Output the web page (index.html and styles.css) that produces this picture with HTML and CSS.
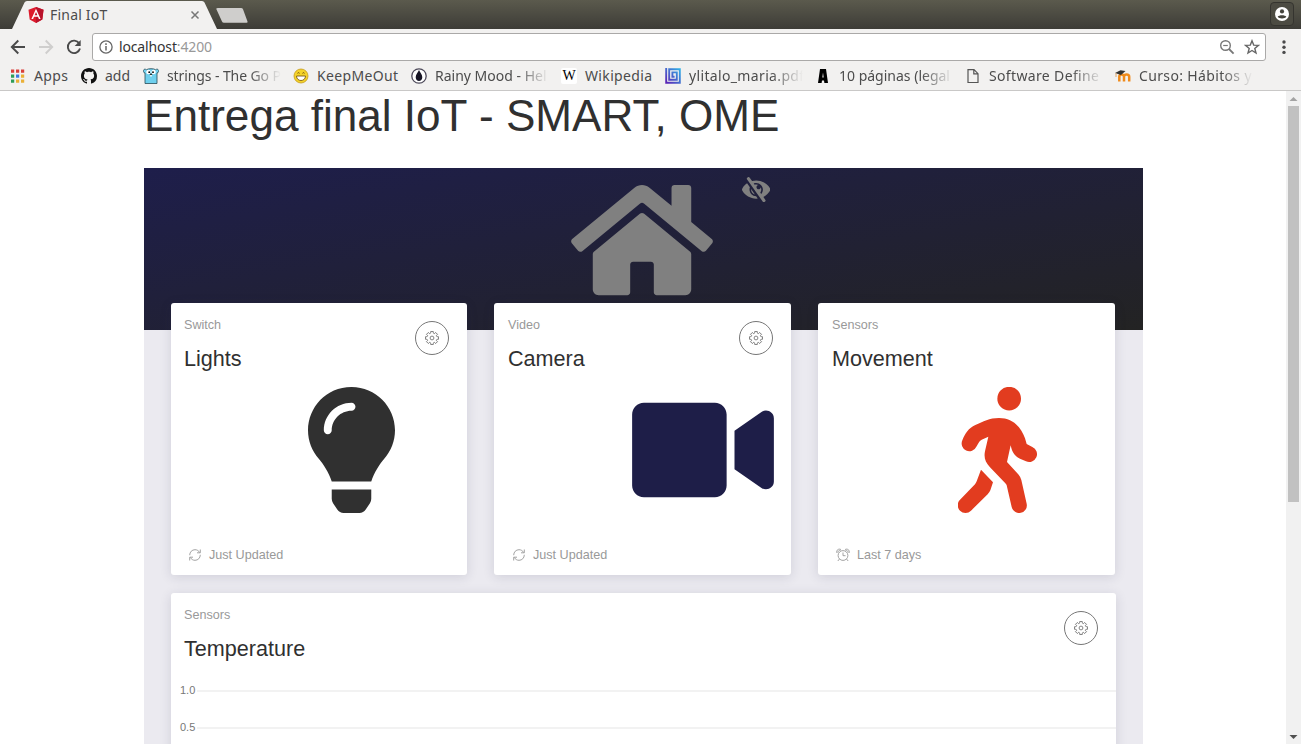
FILE: index.html
```html
<!DOCTYPE html>
<html lang="es">
<head>
<meta charset="utf-8">
<title>Final IoT</title>
<link rel="stylesheet" href="styles.css">
</head>
<body>
<svg class="defs" width="0" height="0" aria-hidden="true">
  <symbol id="gear" viewBox="-8 -8 16 16">
    <g fill="none" stroke="#777" stroke-width=".9">
      <path id="tooth" d="M-1.84-4.43L-1.3-5V-6.5H1.3V-5L1.84-4.43"/>
      <use href="#tooth" transform="rotate(45)"/><use href="#tooth" transform="rotate(90)"/>
      <use href="#tooth" transform="rotate(135)"/><use href="#tooth" transform="rotate(180)"/>
      <use href="#tooth" transform="rotate(225)"/><use href="#tooth" transform="rotate(270)"/>
      <use href="#tooth" transform="rotate(315)"/>
      <circle r="1.9"/>
    </g>
  </symbol>
  <symbol id="reload" viewBox="0 0 12 12">
    <g fill="none" stroke="#999" stroke-width=".9">
      <path d="M.7 6.2C.7 3 3 .7 6 .7c2 0 3.700 1 4.600 2.800M11.300 5.800c0 3.200-2.300 5.500-5.300 5.500-2 0-3.700-1-4.600-2.800M11.300.5v3.300H8M.7 11.500V8.200H4"/>
    </g>
  </symbol>
</svg>

<header class="browser">
  <div class="tabstrip">
    <svg class="tab-shape" width="255" height="29" viewBox="0 0 255 29">
      <path d="M12 29L24.500 2.500Q25.200 1 27 1H202Q203.800 1 204.500 2.500L217 29Z" fill="#f2f1f0"/>
      <path d="M218 8h23q1.500 0 2 1.300l4.500 12.200q.4 1.200-1 1.200H224q-1.500 0-2-1.300L216.300 9q-.3-1 1.700-1z" fill="#cfcecc"/>
    </svg>
    <div class="tab">
      <svg width="16" height="16" viewBox="0 0 16 16"><path d="M8 0l7.500 2.700-1.200 9.800L8 16l-6.300-3.500L.5 2.700z" fill="#dd1b2c"/><path d="M8 0l7.500 2.700-1.200 9.800L8 16z" fill="#b9122b"/><path d="M8 1.800L3.400 12h1.700l.9-2.300h4l.9 2.300h1.700zm0 3.300l1.400 3.200H6.600z" fill="#fff"/></svg>
      <span class="tab-title">Final IoT</span>
      <svg class="tab-close" width="10" height="10" viewBox="0 0 10 10"><path d="M1.500 1.500l7 7m0-7l-7 7" stroke="#777" stroke-width="1.500"/></svg>
    </div>
    <div class="profile"><svg width="16" height="16" viewBox="0 0 16 16"><circle cx="8" cy="8" r="7" fill="#fff"/><circle cx="8" cy="5.400" r="2.100" fill="#44433c"/><path d="M3.700 10.800C5 8.800 11 8.800 12.300 10.800 11 13 5 13 3.700 10.800z" fill="#44433c"/></svg></div>
  </div>

  <div class="toolbar">
    <svg width="16" height="16" viewBox="0 0 16 16"><path d="M15 8H2M8.300 1.500L1.800 8l6.500 6.500" fill="none" stroke="#4a4a4a" stroke-width="1.900"/></svg>
    <svg width="16" height="16" viewBox="0 0 16 16"><path d="M1 8h13M7.700 1.500L14.200 8l-6.500 6.500" fill="none" stroke="#cfcecd" stroke-width="1.900"/></svg>
    <svg width="16" height="16" viewBox="0 0 16 16"><path d="M13.200 4.400A6.200 6.200 0 1 0 14 9.600" fill="none" stroke="#4a4a4a" stroke-width="1.900"/><path d="M14.700 1v6H8.700z" fill="#4a4a4a"/></svg>
    <div class="address">
      <svg width="14" height="14" viewBox="0 0 14 14"><circle cx="7" cy="7" r="6.100" fill="none" stroke="#666" stroke-width="1.300"/><path d="M7 6v4.500M7 3.300v1.600" stroke="#666" stroke-width="1.500"/></svg>
      <span class="url">localhost<span class="port">:4200</span></span>
      <svg width="16" height="16" viewBox="0 0 16 16"><circle cx="6.500" cy="6.500" r="4.800" fill="none" stroke="#777" stroke-width="1.400"/><path d="M10 10l4.600 4.600" stroke="#777" stroke-width="1.800"/><path d="M4.200 6.500h4.600" stroke="#777" stroke-width="1.200"/></svg>
      <svg class="star" width="16" height="16" viewBox="0 0 16 16"><path d="M8 1.800l1.700 4.300 4.700.3-3.600 3 1.200 4.600L8 11.500 4 14l1.200-4.600-3.600-3 4.700-.3z" fill="none" stroke="#666" stroke-width="1.400"/></svg>
    </div>
    <svg class="menu" width="4" height="16" viewBox="0 0 4 16"><g fill="#4a4a4a"><circle cx="2" cy="3" r="1.700"/><circle cx="2" cy="8.200" r="1.700"/><circle cx="2" cy="13.400" r="1.700"/></g></svg>
  </div>

  <nav class="bookmarks">
    <a class="bm"><svg width="16" height="16" viewBox="0 0 16 16"><path d="M2 1.500h3.200v3.200H2zM7 1.500h3.200v3.200H7zM12 1.500h3.200v3.200H12z" fill="#d93f3a"/><path d="M2 6.500h3.200v3.200H2zM2 11.500h3.200v3.200H2z" fill="#2e9d58"/><path d="M7 6.500h3.200v3.200H7z" fill="#3c78e0"/><path d="M12 6.500h3.200v3.200H12zM7 11.500h3.200v3.200H7zM12 11.500h3.200v3.200H12z" fill="#eab036"/></svg><span class="apps">Apps</span></a>
    <a class="bm"><svg width="16" height="16" viewBox="0 0 16 16"><path fill="#111" d="M8 0C3.580 0 0 3.580 0 8c0 3.540 2.290 6.530 5.470 7.590.4.070.55-.17.55-.38 0-.19-.01-.82-.01-1.490-2.010.37-2.530-.49-2.690-.94-.09-.23-.48-.94-.82-1.130-.28-.15-.68-.52-.01-.53.63-.01 1.080.58 1.230.82.72 1.210 1.870.87 2.330.66.070-.52.280-.87.510-1.070-1.780-.2-3.640-.89-3.640-3.950 0-.87.310-1.590.820-2.150-.08-.2-.36-1.020.08-2.120 0 0 .67-.21 2.200.82.64-.18 1.320-.27 2-.27s1.360.09 2 .27c1.530-1.040 2.200-.82 2.200-.82.44 1.100.16 1.920.08 2.120.51.56.82 1.270.82 2.150 0 3.070-1.870 3.750-3.650 3.950.29.25.54.73.54 1.480 0 1.070-.01 1.930-.01 2.200 0 .21.15.46.55.38A8.010 8.010 0 0 0 16 8c0-4.420-3.580-8-8-8z"/></svg><span>add</span></a>
    <a class="bm"><svg width="16" height="16" viewBox="0 0 16 16"><path d="M2 15.500V5C.5 5-.3 2.600 1 1.500c.8-.6 1.800-.3 2.300.3C5 .3 11 .3 12.700 1.800c.5-.6 1.500-.9 2.300-.3C16.300 2.600 15.500 5 14 5v10.500z" fill="#6fd0ee" stroke="#274b57" stroke-width=".8"/><circle cx="5.400" cy="4" r="2.200" fill="#fff"/><circle cx="10.600" cy="4" r="2.200" fill="#fff"/><circle cx="6.200" cy="4.200" r=".9"/><circle cx="10" cy="4.200" r=".9"/><ellipse cx="8" cy="6.400" rx="1.300" ry=".8" fill="#333"/><path d="M7.200 7h1.600v1.600H7.200z" fill="#fff"/></svg><span class="fade narrow">strings - The Go P</span></a>
    <a class="bm"><svg width="16" height="16" viewBox="0 0 16 16"><circle cx="8" cy="8" r="7" fill="#f5d328" stroke="#c49a20" stroke-width=".8"/><path d="M3.500 8h9c0 6-9 6-9 0z" fill="#fff" stroke="#7d5b12" stroke-width=".9"/><path d="M4.500 5.300q1-1.300 2 0M9.500 5.300q1-1.300 2 0" fill="none" stroke="#6b4d10"/></svg><span class="wide">KeepMeOut</span></a>
    <a class="bm"><svg width="16" height="16" viewBox="0 0 16 16"><circle cx="8" cy="8" r="7.200" fill="#fff" stroke="#4d4a5a" stroke-width="1.300"/><path d="M8 2c1 2.500 3.300 4.200 3.300 7.200C11.300 11.600 9.800 13 8 13s-3.300-1.400-3.300-3.800C4.700 6.200 7 4.500 8 2z" fill="#171525"/></svg><span class="fade">Rainy Mood - Hel</span></a>
    <a class="bm"><i class="wiki">W</i><span class="wide">Wikipedia</span></a>
    <a class="bm"><svg width="16" height="16" viewBox="0 0 16 16"><defs><linearGradient id="sp" x1="1" y1="0" x2="0" y2="1"><stop offset="0" stop-color="#2fb4e8"/><stop offset="1" stop-color="#5b22b5"/></linearGradient></defs><path d="M1.200 0v14.800H14.800V1.200H4.200v10.500h7.600V4.400H7.400v4.300h2.200" fill="none" stroke="url(#sp)" stroke-width="1.900"/></svg><span class="fade wide">ylitalo_maria.pdf</span></a>
    <a class="bm"><svg width="16" height="16" viewBox="0 0 16 16"><path fill="#000" fill-rule="evenodd" d="M5 1h6l2 14H9.400L9 12.500H7L6.600 15H3zM7.300 9.500h1.400L8 4.500z"/></svg><span class="fade">10 páginas (legal</span></a>
    <a class="bm"><svg width="16" height="16" viewBox="0 0 16 16"><path d="M3 1.700h6l4 4v8.800H3zM8.800 1.700v4.200H13" fill="none" stroke="#555" stroke-width="1.200"/></svg><span class="fade wide">Software Define</span></a>
    <a class="bm"><svg width="16" height="16" viewBox="0 0 16 16"><path d="M3.300 13.500V8.800c0-3.200 4.700-3.200 4.700 0v4.700V8.800c0-3.200 5.200-3.200 5.200 0v4.700" transform="translate(1)" fill="none" stroke="#f08b1c" stroke-width="2.500"/><path d="M0 5l5.500-2.800L10.500 3 6 7z" fill="#333"/><path d="M1 5v4" stroke="#d9984b" stroke-width=".8"/></svg><span class="fade wide">Curso: Hábitos y</span></a>
  </nav>
</header>

<div class="viewport">
  <main class="page">
    <h1>Entrega final IoT - SMART, OME</h1>
    <section class="dashboard">
      <div class="banner">
        <svg width="142" height="126" viewBox="0 0 576 512"><path fill="#808080" d="M488 312.700V456c0 13.300-10.700 24-24 24H348c-6.600 0-12-5.400-12-12V356c0-6.600-5.400-12-12-12h-72c-6.600 0-12 5.400-12 12v112c0 6.600-5.400 12-12 12H112c-13.300 0-24-10.700-24-24V312.700c0-3.600 1.600-7 4.400-9.300l188-154.800c4.400-3.600 10.800-3.600 15.300 0l188 154.800c2.700 2.300 4.300 5.700 4.300 9.300zm83.600-60.900L488 182.900V44.400c0-6.600-5.400-12-12-12h-56c-6.600 0-12 5.400-12 12V117l-89.500-73.700c-17.700-14.600-43.300-14.600-61 0L4.400 251.800c-5.100 4.200-5.800 11.800-1.600 16.900l25.500 31c4.200 5.100 11.800 5.800 16.900 1.600l235.200-193.700c4.400-3.600 10.800-3.600 15.300 0l235.200 193.700c5.100 4.200 12.700 3.500 16.900-1.600l25.500-31c4.200-5.200 3.400-12.700-1.700-16.900z"/></svg>
        <svg width="28.400" height="25.200" viewBox="0 0 576 512"><path fill="#808080" d="M286.693 391.984l32.579 46.542A333.958 333.958 0 0 1 288 440C168.190 440 63.031 376.051 6.646 280.369a47.999 47.999 0 0 1 0-48.739c24.023-40.766 56.913-75.775 96.024-102.537l57.077 81.539C154.736 224.820 152 240.087 152 256c0 74.736 60.135 135.282 134.693 135.984zm282.661-111.615c-31.667 53.737-78.747 97.460-135.175 125.475l.011.015 41.470 59.200c7.600 10.860 4.960 25.820-5.900 33.420l-13.110 9.180c-10.860 7.600-25.820 4.960-33.420-5.900L100.340 46.940c-7.600-10.860-4.960-25.820 5.900-33.420l13.110-9.180c10.860-7.600 25.820-4.960 33.420 5.900l51.038 72.617C230.680 75.776 258.905 72 288 72c119.810 0 224.969 63.949 281.354 159.631a48.002 48.002 0 0 1 0 48.738zM424 256c0-75.174-60.838-136-136-136-17.939 0-35.056 3.473-50.729 9.772l19.299 27.058c25.869-8.171 55.044-6.163 80.400 7.410h-.03c-23.650 0-42.820 19.170-42.820 42.820 0 23.626 19.147 42.820 42.820 42.820 23.650 0 42.820-19.170 42.820-42.820v-.03c18.462 34.490 16.312 77.914-8.250 110.950v.01l19.314 27.061C411.496 321.200 424 290.074 424 256zM262.014 356.727l-77.530-110.757c-5.014 52.387 29.314 98.354 77.530 110.757z"/></svg>
      </div>

      <div class="cards">
        <article class="card">
          <div class="card-head"><div><p class="category">Switch</p><h2>Lights</h2></div><button class="round"><svg width="16" height="16"><use href="#gear"/></svg></button></div>
          <div class="figure bulb"><svg width="87" height="126" viewBox="0 0 352 512" preserveAspectRatio="none"><path fill="#303030" d="M96.060 454.350c.01 6.290 1.870 12.450 5.360 17.690l17.090 25.690a31.990 31.990 0 0 0 26.640 14.280h61.710a31.990 31.990 0 0 0 26.640-14.280l17.090-25.690a31.989 31.989 0 0 0 5.360-17.690l.04-38.350H96.010l.05 38.350zM0 176c0 44.370 16.450 84.850 43.560 115.780 16.520 18.850 42.360 58.230 52.210 91.450.04.26.07.52.11.78h160.240c.04-.26.07-.51.11-.78 9.850-33.220 35.690-72.600 52.210-91.450C335.550 260.850 352 220.370 352 176 352 78.610 272.910-.3 175.450 0 73.440.31 0 82.970 0 176zm176-80c-44.110 0-80 35.890-80 80 0 8.840-7.160 16-16 16s-16-7.160-16-16c0-61.760 50.240-112 112-112 8.840 0 16 7.160 16 16s-7.160 16-16 16z"/></svg></div>
          <p class="stats"><svg width="12" height="12"><use href="#reload"/></svg>Just Updated</p>
        </article>
        <article class="card">
          <div class="card-head"><div><p class="category">Video</p><h2>Camera</h2></div><button class="round"><svg width="16" height="16"><use href="#gear"/></svg></button></div>
          <div class="figure camera"><svg width="142" height="126" viewBox="0 0 576 512"><path fill="#1e1e48" d="M336.200 64H47.800C21.400 64 0 85.400 0 111.800v288.400C0 426.600 21.400 448 47.800 448h288.400c26.400 0 47.800-21.400 47.800-47.800V111.800c0-26.400-21.400-47.800-47.800-47.800zm189.400 37.700L416 177.300v157.400l109.600 75.500c21.200 14.600 50.400-.3 50.400-25.800V127.500c0-25.400-29.100-40.400-50.400-25.800z"/></svg></div>
          <p class="stats"><svg width="12" height="12"><use href="#reload"/></svg>Just Updated</p>
        </article>
        <article class="card">
          <div class="card-head"><div><p class="category">Sensors</p><h2>Movement</h2></div></div>
          <div class="figure walker"><svg width="79" height="126" viewBox="474 291 237 378"><g fill="#e23c1f"><circle cx="627.500" cy="326" r="35.500"/><path d="M543 539L579 577 571 601Q568 608 563 613L513 662A23 23 0 0 1 480 629L525 583Q528 579 530 574Z"/><path d="M565 440L545 449Q539 452 536 458L529 470A23 23 0 0 1 487 451C495 430 506 414 526 405 550 395 568 384 597 384 640 384 664 413 675 445L680 462 697 471A23 23 0 0 1 678 514L660 506C643 499 636 485 632 466L621 516 656 554Q662 561 664 570L680 641A23 23 0 0 1 635 651L620 586Q620 584 616 580L570 532C556 517 551 503 555 484Z"/></g></svg></div>
          <p class="stats"><svg class="clock" width="14" height="14" viewBox="0 0 14 14"><g fill="none" stroke="#999" stroke-width=".9"><circle cx="7" cy="7.500" r="4.900"/><path d="M7 4.500v3.200h2.500M3.500 11l-1.700 2M10.500 11l1.700 2M1 5C-.2 2 3 .1 5 1.700M2 4.500C2 3 3 2.200 4.500 2.300M13 5c1.200-3-2-4.900-4-3.300M12 4.500C12 3 11 2.200 9.500 2.300"/></g></svg>Last 7 days</p>
        </article>
      </div>

      <article class="card chart-card">
        <div class="card-head"><div><p class="category">Sensors</p><h2>Temperature</h2></div><button class="round"><svg width="16" height="16"><use href="#gear"/></svg></button></div>
        <div class="chart">
          <div class="tick"><span>1.0</span></div>
          <div class="tick"><span>0.5</span></div>
        </div>
      </article>
    </section>
  </main>
  <div class="scrollbar">
    <svg width="15" height="15" viewBox="0 0 15 15"><path d="M3.500 10l4-4 4 4z" fill="#a3a3a3"/></svg>
    <div class="thumb"></div>
    <svg class="down" width="15" height="15" viewBox="0 0 15 15"><path d="M3.500 6l4 4 4-4z" fill="#505050"/></svg>
  </div>
</div>
</body>
</html>
```
FILE: styles.css
```css
* { box-sizing: border-box; }
body { margin: 0; height: 744px; overflow: hidden; display: flex; flex-direction: column; background: #fff; color: #303030; font-family: "Liberation Sans", Arial, sans-serif; }
.defs { position: absolute; }
svg { display: block; flex: none; }
h1, h2, p { margin: 0; font-weight: 400; }

.browser { flex: none; height: 91px; background: #f2f1f0; border-bottom: 1px solid #c9c8c7; font: 14px "Noto Sans", sans-serif; color: #4c4c4c; }
.tabstrip { position: relative; height: 29px; background: linear-gradient(#5b5a4d, #3d3c37); display: flex; justify-content: space-between; }
.tab-shape { position: absolute; left: 0; top: 0; }
.tab { position: relative; width: 205px; padding: 1px 5px 0 28px; display: flex; align-items: center; }
.tab-title { flex: 1; margin-left: 6px; padding-bottom: 2px; letter-spacing: .2px; }
.profile { width: 24px; height: 24px; margin: 2px 7px 0 0; border: 1px solid #35342f; border-radius: 4px; display: grid; place-items: center; background: #4c4b42; }
.toolbar { height: 33px; padding: 2px 15px 0 10px; display: flex; align-items: center; gap: 12px; }
.address { flex: 1; height: 28px; margin: 0 4px 0 -2px; padding: 0 5px 0 6px; border: 1px solid #aaa9a8; border-radius: 3px; background: #fff; display: flex; align-items: center; }
.url { flex: 1; margin-left: 6px; padding-bottom: 1px; color: #333; letter-spacing: -.15px; }
.port { color: #999; }
.star { margin-left: 9px; }
.bookmarks { height: 28px; padding-left: 9px; display: grid; grid-template-columns: 72px 62px 150px 118px 150px 104px 150px 150px 150px 150px; align-items: center; }
.bm { display: flex; align-items: center; gap: 8px; white-space: nowrap; }
.bm span { padding-bottom: 2px; }
.bm .apps { margin-left: 1px; letter-spacing: .4px; }
.bm .narrow { letter-spacing: -.1px; }
.bm .wide { letter-spacing: .35px; }
.bm .fade { -webkit-mask-image: linear-gradient(90deg, #000 82px, transparent 114px); mask-image: linear-gradient(90deg, #000 82px, transparent 114px); }
.wiki { width: 16px; height: 16px; background: #fff; border-radius: 2px; font: 14px/16px "Liberation Serif", serif; color: #000; text-align: center; }

.viewport { flex: 1; min-height: 0; display: flex; }
.page { flex: 1; padding: 0 143px 0 144px; overflow: hidden; }
h1 { height: 77px; font-size: 44.1px; line-height: 49px; }
.dashboard { height: 600px; background: #ebeaf0; padding: 0 27px; }
.banner { height: 162px; margin: 0 -27px -27px; padding: 8.700px 0 0 427px; display: flex; gap: 29px; background: linear-gradient(to bottom right, #1e1e4b, #232323); }
.cards { display: grid; grid-template-columns: 296px 297px 297px; gap: 27px; }
.card { height: 272px; padding: 14px 18px 0 13px; background: #fff; border-radius: 3px; box-shadow: 0 2px 12px rgba(40, 40, 80, .14); display: flex; flex-direction: column; }
.card + .card { padding-left: 14px; }
.card-head { height: 70px; display: flex; justify-content: space-between; }
.category { padding-top: 1px; font-size: 12.600px; line-height: 15px; color: #999; }
h2 { margin-top: 13px; font-size: 21.600px; line-height: 25px; }
.round { width: 34px; height: 34px; margin-top: 4px; padding: 0; border: 1px solid #777; border-radius: 50%; background: none; display: grid; place-items: center; }
.figure { height: 160px; }
.bulb { padding-left: 123.500px; }
.camera { padding-left: 123.600px; }
.walker { padding-left: 126px; }
.stats { display: flex; align-items: center; gap: 8px; padding: 1px 0 0 5px; font-size: 12.600px; line-height: 15px; color: #999; }
.stats svg { margin-top: -1px; }
.stats .clock { margin: -1px -1px 0; }
.figure svg { margin-top: -.4px; }
.chart-card { width: 945px; height: 300px; margin-top: 18px; }
.chart { margin: 6px -18px 0 -4px; }
.tick { height: 36.500px; display: flex; align-items: flex-start; font-size: 11px; line-height: 14px; color: #777; }
.tick::after { content: ""; flex: 1; height: 2px; margin: 7px 0 0 2px; background: #f2f2f2; }
.scrollbar { width: 15px; background: #f1f1f1; display: flex; flex-direction: column; align-items: center; }
.thumb { width: 11px; height: 396px; background: #c1c1c1; }
.down { margin-top: auto; }
```
